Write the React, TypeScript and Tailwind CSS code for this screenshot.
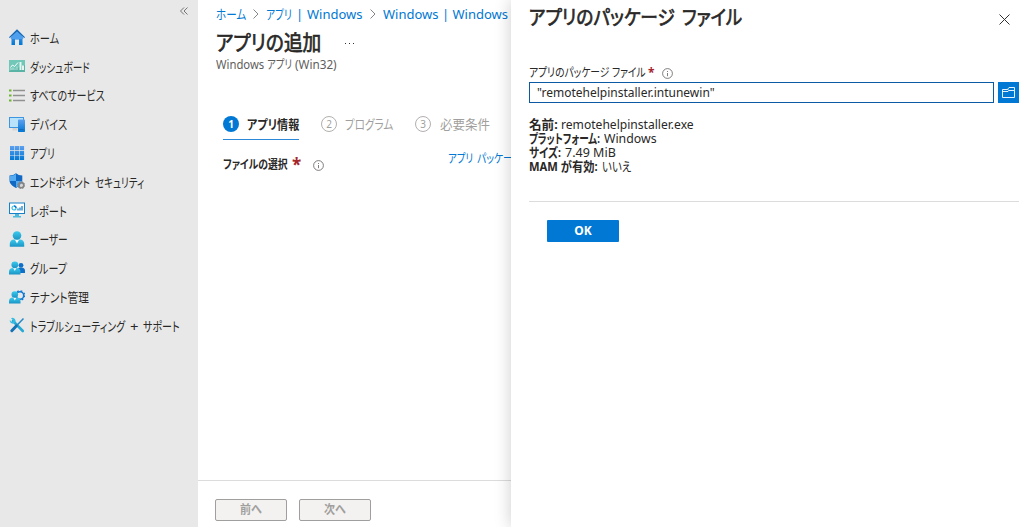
import { useLayoutEffect, useRef, useState } from "react";
import type { ReactNode } from "react";

// Text squeezed to a given width, UI fonts draw kana narrower than the em box
function Fit({ w, className = "", children }: { w: number; className?: string; children: ReactNode }) {
  const ref = useRef<HTMLSpanElement>(null);
  const [scale, setScale] = useState(1);

  useLayoutEffect(() => {
    if (ref.current) setScale(w / ref.current.offsetWidth);
  }, [w]);

  return (
    <span className={`block shrink-0 whitespace-nowrap ${className}`} style={{ width: w }}>
      <span ref={ref} className="inline-block origin-left" style={{ transform: `scaleX(${scale})` }}>
        {children}
      </span>
    </span>
  );
}

const icons = {
  home: (
    <>
      <path d="M2.500 7.500 8 2l5.500 5.500V16H10v-5.500H6V16H2.500Z" fill="url(#blue)" />
      <path d="M0 8.200 8 .3l8 7.900-.8.800L8 2.800.8 9Z" fill="#1267b5" />
      <path d="M1.800 8.500 8 2.500l6.200 6v1.500H1.800Z" fill="#4f9fef" />
    </>
  ),
  dashboard: (
    <>
      <rect y="2" width="16" height="12" fill="#59b4a5" />
      <path d="M0 2h16v5L0 13Z" fill="#71c7b8" />
      <path d="m1.500 9.500 2-2.500 2 1.500 3.500-4" fill="none" stroke="#fff" />
      <path d="M2 12V10M4 12V9.500M6 12v-1.500M8 12V8.500" stroke="#b9e5dd" />
      <path d="M10.500 4h2v8h-2zM13 7.500h2V12h-2z" fill="#e4f5f2" />
    </>
  ),
  list: (
    <>
      <path d="M4 3.500h12M4 8.500h12M4 13.500h12" stroke="#919191" strokeWidth="1.300" />
      <path d="M0 2.500h2.500v2H0zM0 7.500h2.500v2H0zM0 12.500h2.500v2H0z" fill="#6bb52c" />
    </>
  ),
  device: (
    <>
      <rect x=".5" y="1.500" width="14" height="10" fill="#b9e3fb" stroke="#3d96df" />
      <path d="M3.500 12h5v2.500h-5z" fill="#d4d4d4" />
      <rect x="9" y="3.500" width="7" height="12.500" rx=".7" fill="url(#blue)" />
      <path d="M10.500 13.500h4" stroke="#1769b5" />
    </>
  ),
  apps: (
    <path
      d="M1 1h4.300v4.300H1zM5.900 1h4.300v4.300H5.900zM10.800 1h4.300v4.300h-4.300zM1 5.900h4.300v4.300H1zM5.900 5.900h4.300v4.300H5.900zM10.800 5.900h4.300v4.300h-4.300zM1 10.800h4.300v4.300H1zM5.900 10.800h4.300v4.300H5.900zM10.800 10.800h4.300v4.300h-4.300z"
      fill="url(#blue)"
    />
  ),
  shield: (
    <>
      <path d="M.5 2.500Q4.500 2.500 7 .3q2.500 2.200 6.300 2.200V7c0 4-3 6.300-6.300 8C3.500 13.300.5 11 .5 7Z" fill="#1269c4" />
      <path d="M7 .8V8H1V3Q4.500 3 7 .8M7 8h6c0 3-3 5-6 6.500Z" fill="#55abf1" />
      <circle cx="12.200" cy="12.200" r="2.500" fill="none" stroke="#858585" strokeWidth="1.800" />
      <circle cx="12.200" cy="12.200" r="3.500" fill="none" stroke="#858585" strokeWidth="1" strokeDasharray="1.300 1.450" />
      <circle cx="12.200" cy="12.200" r="1.200" fill="#d6d6d6" />
    </>
  ),
  report: (
    <>
      <path d="M6 12h4v2h2v1.500H4V14h2z" fill="#4dbbd9" />
      <rect x=".5" y="1" width="15" height="10.500" fill="#fff" stroke="#1681c9" />
      <circle cx="5" cy="6" r="2" fill="none" stroke="#36bde3" strokeWidth="1.200" />
      <path d="M5 4a2 2 0 0 1 2 2" fill="none" stroke="#0878d4" strokeWidth="1.300" />
      <path d="M9 8.500V6.500M11 8.500V5.500M13 8.500V4" stroke="#1681c9" strokeWidth="1.300" />
    </>
  ),
  user: (
    <>
      <path d="M.8 15.800V13C.8 9.800 3 8.500 5.500 8.500h5c2.500 0 4.700 1.300 4.700 4.500v2.800Z" fill="url(#cyan)" />
      <path d="M5.800 8.500 8 12.500l2.200-4Z" fill="#fff" />
      <circle cx="8" cy="4.500" r="4.300" fill="url(#cyan)" />
    </>
  ),
  group: (
    <>
      <circle cx="12" cy="5.300" r="2.400" fill="#0f70c9" />
      <path d="M8 13V11q0-3.500 3.500-3.500h1q3.500 0 3.500 3.500v2Z" fill="#0f70c9" />
      <path d="M0 14.500V12q0-4 4-4h3.500q4 0 4 4v2.500Z" fill="url(#cyan)" />
      <path d="m4.200 8 1.600 3 1.600-3Z" fill="#fff" />
      <circle cx="5.800" cy="4.800" r="3.400" fill="url(#cyan)" />
    </>
  ),
  tenant: (
    <>
      <circle cx="11" cy="6.500" r="3.700" fill="none" stroke="#0f78d4" strokeWidth="1.500" />
      <circle cx="11" cy="6.500" r="4.700" fill="none" stroke="#0f78d4" strokeWidth="1.300" strokeDasharray="1.700 2" />
      <path d="M0 14.500v-2q0-4 4-4h3.500q4 0 4 4v2Z" fill="url(#cyan)" />
      <path d="m4.200 8.500 1.600 3 1.600-3Z" fill="#fff" />
      <circle cx="5.800" cy="5.500" r="3.300" fill="url(#cyan)" />
    </>
  ),
  tools: (
    <>
      <path d="m4 4 9.800 10" stroke="#27a9d5" strokeWidth="2.600" strokeLinecap="round" />
      <path d="M2 1.200 4.300 3.400 3.600 5 1.800 4.200.8 2.800Q.5 6.500 4 6.700l2.500-1.500Q7 1.500 3.500.8Z" fill="#32bce1" />
      <path d="m14.500 1.500-7 7.300" stroke="#2389c4" strokeWidth="1.500" />
      <path d="m7.300 9-4.500 4.700" stroke="#1272b5" strokeWidth="3" strokeLinecap="round" />
    </>
  ),
};

// Each label is a list of [text, width] words
const menu: { icon: keyof typeof icons; label: [string, number][] }[] = [
  { icon: "home", label: [["ホーム", 29]] },
  { icon: "dashboard", label: [["ダッシュボード", 60]] },
  { icon: "list", label: [["すべてのサービス", 75]] },
  { icon: "device", label: [["デバイス", 37]] },
  { icon: "apps", label: [["アプリ", 25]] },
  { icon: "shield", label: [["エンドポイント", 60], ["セキュリティ", 49]] },
  { icon: "report", label: [["レポート", 37]] },
  { icon: "user", label: [["ユーザー", 38]] },
  { icon: "group", label: [["グループ", 37]] },
  { icon: "tenant", label: [["テナント管理", 59]] },
  { icon: "tools", label: [["トラブルシューティング", 95], ["+", 8], ["サポート", 37]] },
];

function Info() {
  return (
    <svg className="block shrink-0" width="11" height="11" viewBox="0 0 11 11" fill="none" stroke="#605e5c">
      <circle cx="5.500" cy="5.500" r="4.900" strokeWidth=".8" />
      <path d="M5.500 5v3.200M5.500 3v1" strokeWidth=".8" />
    </svg>
  );
}

function Chevron() {
  return (
    <svg className="mx-[7px] shrink-0" width="6" height="10" viewBox="0 0 6 10" fill="none" stroke="#777" strokeWidth=".9">
      <path d="m.5.500 4.500 4.500L.5 9.500" />
    </svg>
  );
}

export default function App() {
  return (
    <div className="flex h-[527px] w-[1028px] overflow-hidden bg-white text-[13px] leading-4 text-[#292827] [font-family:'Noto_Sans','Noto_Sans_CJK_JP',sans-serif] [font-feature-settings:'palt']">
      {/* Gradients shared by the icons */}
      <svg className="absolute" width="0" height="0">
        <linearGradient id="blue" x2="0" y2="1">
          <stop stopColor="#5ea0ef" />
          <stop offset="1" stopColor="#0078d4" />
        </linearGradient>
        <linearGradient id="cyan" x2="0" y2="1">
          <stop stopColor="#3ccbee" />
          <stop offset="1" stopColor="#1b93c4" />
        </linearGradient>
      </svg>

      {/* Sidebar */}
      <aside className="w-[198px] shrink-0 bg-[#e8e8e8]">
        <div className="flex h-[23px] justify-end pt-[7px] pr-[10px]">
          <svg width="8" height="8" viewBox="0 0 8 8" fill="none" stroke="#666" strokeWidth=".9">
            <path d="M4 .5.500 4 4 7.500M7.500.5 4 4l3.500 3.500" />
          </svg>
        </div>
        <nav>
          {menu.map((item) => (
            <a key={item.icon} className="flex h-[28.8px] items-center gap-[5px] pl-[9px]">
              <svg className="shrink-0" width="16" height="16" viewBox="0 0 16 16">
                {icons[item.icon]}
              </svg>
              <span className="flex gap-[5px] pt-px">
                {item.label.map(([text, w]) => (
                  <Fit key={text} w={w}>{text}</Fit>
                ))}
              </span>
            </a>
          ))}
        </nav>
      </aside>

      {/* Main */}
      <main className="flex w-[313px] shrink-0 flex-col overflow-hidden">
        <div className="flex h-[28px] items-center pl-[18px] text-[#0078d4]">
          <Fit w={30}>ホーム</Fit>
          <Chevron />
          <span className="flex w-[97px] shrink-0">
            <Fit w={26}>アプリ</Fit>
            <span className="w-[15px] text-center">|</span>
            <Fit w={56}>Windows</Fit>
          </span>
          <Chevron />
          <Fit w={125}>Windows | Windows</Fit>
        </div>
        <div className="flex h-[29px] items-center pl-[18px]">
          <Fit w={105} className="-mt-[2px] text-[21px] leading-7 [-webkit-text-stroke:0.7px]">アプリの追加</Fit>
          <svg className="ml-[23px]" width="12" height="4" fill="#323130">
            <path d="M1 2h1v1H1zM5 2h1v1H5zM9 2h1v1H9z" />
          </svg>
        </div>
        <div className="flex gap-[3px] pl-[18px] text-[12px] text-[#605e5c]">
          <Fit w={48}>Windows</Fit>
          <Fit w={25}>アプリ</Fit>
          <Fit w={42}>(Win32)</Fit>
        </div>

        {/* Steps */}
        <div className="mt-9 flex pl-[25px]">
          <div className="flex h-[31px] items-center gap-2 border-b border-[#2b88d8]">
            <span className="flex size-4 items-center justify-center rounded-full bg-[#0078d4] text-[10px] font-bold text-white">1</span>
            <Fit w={52} className="font-bold">アプリ情報</Fit>
          </div>
          <div className="ml-[22px] flex h-[30px] items-center gap-2 text-[#a19f9d]">
            <span className="flex size-4 items-center justify-center rounded-full border border-[#b3b0ad] text-[10px]">2</span>
            <Fit w={48}>プログラム</Fit>
          </div>
          <div className="ml-[22px] flex h-[30px] items-center gap-[9px] text-[#a19f9d]">
            <span className="flex size-4 items-center justify-center rounded-full border border-[#b3b0ad] text-[10px]">3</span>
            <Fit w={50}>必要条件</Fit>
          </div>
        </div>

        <div className="mt-[11px] flex h-[29px] items-start pl-[25px]">
          <div className="flex w-[225px] shrink-0 items-center pt-[6px]">
            <Fit w={65} className="text-[12px] font-bold">ファイルの選択</Fit>
            <span className="ml-1 w-[9px] text-[17px] font-bold text-[#a4262c]">*</span>
            <span className="ml-[12px]"><Info /></span>
          </div>
          <span className="flex gap-[4px] text-[12px] text-[#0078d4]">
            <Fit w={25}>アプリ</Fit>
            <Fit w={36}>パッケー</Fit>
          </span>
        </div>

        {/* Footer */}
        <div className="mt-auto flex h-[47px] shrink-0 items-start gap-3 border-t border-[#dcdcdc] pt-[18px] pl-[17px] text-[12px] font-bold text-[#a19f9d]">
          <button className="flex h-[22px] w-[72px] items-center justify-center rounded-[2px] border border-[#a19f9d] bg-[#f3f2f1]">
            <Fit w={22}>前へ</Fit>
          </button>
          <button className="flex h-[22px] w-[72px] items-center justify-center rounded-[2px] border border-[#a19f9d] bg-[#f3f2f1]">
            <Fit w={22}>次へ</Fit>
          </button>
        </div>
      </main>

      {/* Side panel */}
      <section className="relative w-[517px] shrink-0 bg-white pr-[9px] pl-[18px] shadow-[0_0_16px_rgba(0,0,0,0.2)]">
        <div className="flex h-[37px] items-center justify-between">
          <div className="-mt-px flex gap-[7px] text-[20px] leading-7 [-webkit-text-stroke:0.7px]">
            <Fit w={146}>アプリのパッケージ</Fit>
            <Fit w={60}>ファイル</Fit>
          </div>
          <svg className="mt-[2px] mr-[9px]" width="11" height="11" viewBox="0 0 11 11" stroke="#323130">
            <path d="m.5.500 10 10M10.500.5l-10 10" />
          </svg>
        </div>

        <div className="mt-[27px] flex h-[18px] items-center">
          <Fit w={117} className="text-[12px]">アプリのパッケージ ファイル</Fit>
          <span className="ml-[2px] w-[6px] text-[12px] font-bold text-[#a4262c]">*</span>
          <span className="ml-2"><Info /></span>
        </div>
        <div className="flex gap-1">
          <div className="flex h-[21px] w-[465px] items-center border border-[#0c59a4] pb-[2px] pl-[7px]">
            <Fit w={178}>"remotehelpinstaller.intunewin"</Fit>
          </div>
          <button className="flex size-[21px] items-center justify-center bg-[#0078d4]">
            <svg width="13" height="11" viewBox="0 0 13 11" fill="none" stroke="#fff" strokeWidth=".9">
              <path d="M12.500 3.500v7H.5v-8h5M.5 4.500H6l1-1h5.500v-3H7L5.500 2.500 7 3.500" />
            </svg>
          </button>
        </div>

        <dl className="mt-[14px] leading-[14px]">
          <div className="flex gap-[3px]">
            <dt className="font-bold"><Fit w={29}>名前:</Fit></dt>
            <dd><Fit w={133}>remotehelpinstaller.exe</Fit></dd>
          </div>
          <div className="flex gap-1">
            <dt className="font-bold"><Fit w={71}>プラットフォーム:</Fit></dt>
            <dd><Fit w={53}>Windows</Fit></dd>
          </div>
          <div className="flex gap-1">
            <dt className="font-bold"><Fit w={32}>サイズ:</Fit></dt>
            <dd><Fit w={51}>7.49 MiB</Fit></dd>
          </div>
          <div className="flex gap-1">
            <dt className="font-bold"><Fit w={69}>MAM が有効:</Fit></dt>
            <dd><Fit w={29}>いいえ</Fit></dd>
          </div>
        </dl>

        <div className="mt-[28px] border-t border-[#dcdcdc] pt-[18px] pl-[18px]">
          <button className="h-[22px] w-[72px] rounded-[1px] bg-[#0078d4] text-[12px] font-bold text-white">OK</button>
        </div>
      </section>
    </div>
  );
}
